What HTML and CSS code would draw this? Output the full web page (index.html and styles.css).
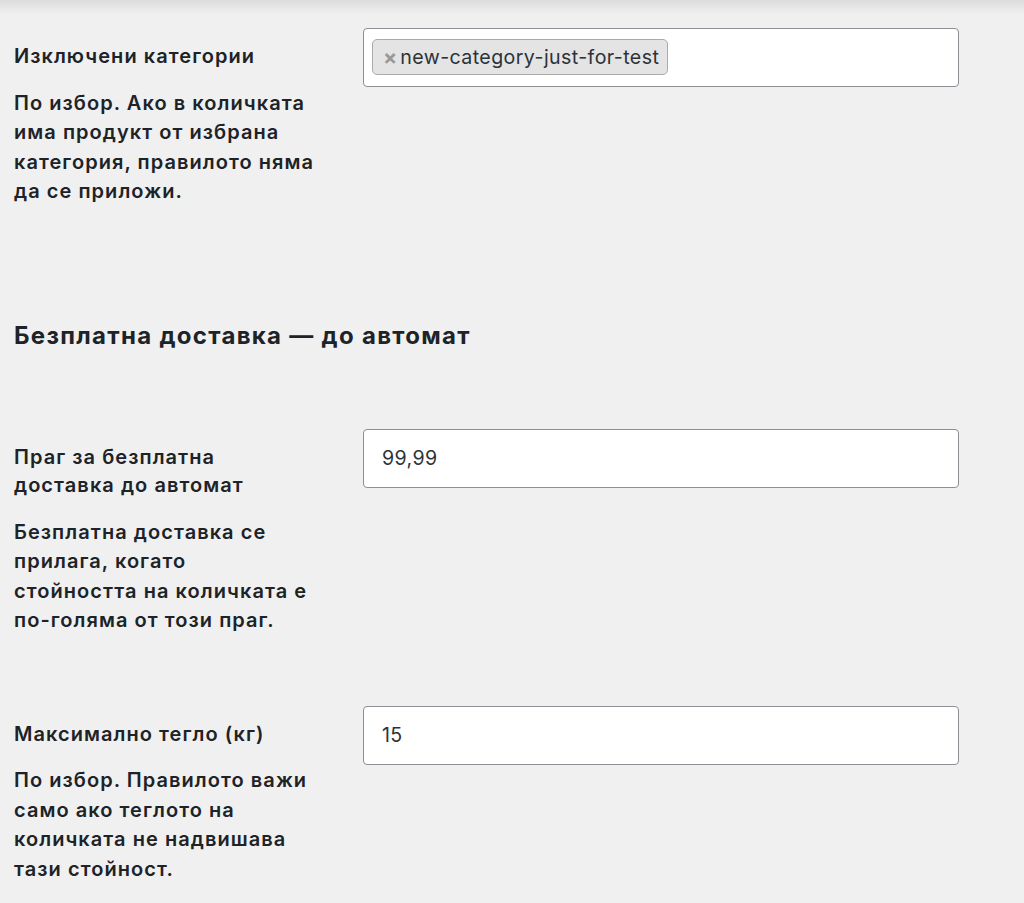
FILE: index.html
```html
<!DOCTYPE html>
<html lang="bg">
<head>
    <meta charset="utf-8">
    <title>Настройки за доставка</title>
    <link rel="stylesheet" href="styles.css">
</head>
<body>
    <div class="page">
        <div class="row">
            <div class="label-col">
                <div class="field-title">Изключени категории</div>
                <p class="description">По избор. Ако в количката има продукт от избрана категория, правилото няма да се приложи.</p>
            </div>
            <div class="field-col">
                <div class="tag-input">
                    <span class="tag"><span class="tag-remove">×</span>new-category-just-for-test</span>
                </div>
            </div>
        </div>

        <h2 class="section-title">Безплатна доставка — до автомат</h2>

        <div class="row">
            <div class="label-col">
                <div class="field-title">Праг за безплатна доставка до автомат</div>
                <p class="description">Безплатна доставка се прилага, когато стойността на количката е по-голяма от този праг.</p>
            </div>
            <div class="field-col">
                <input class="text-input" type="text" value="99,99">
            </div>
        </div>

        <div class="row">
            <div class="label-col">
                <div class="field-title">Максимално тегло (кг)</div>
                <p class="description">По избор. Правилото важи само ако теглото на количката не надвишава тази стойност.</p>
            </div>
            <div class="field-col">
                <input class="text-input" type="text" value="15">
            </div>
        </div>
    </div>
</body>
</html>
```

FILE: styles.css
```css
body {
    margin: 0;
    background: #f0f0f1 linear-gradient(#dcdcde, #f0f0f1 14px) no-repeat;
    font-family: Inter, "Noto Sans", sans-serif;
    color: #1d2327;
}
.page {
    padding: 28px 0 0 14px;
}
.row {
    display: grid;
    grid-template-columns: 349px 596px;
    padding-bottom: 70px;
}
.label-col {
    padding: 14px 49px 0 0;
}
.field-title {
    font-size: 20px;
    font-weight: 600;
    letter-spacing: 1.05px;
    line-height: 28.5px;
}
.description {
    margin: 18px 0 0;
    font-size: 20px;
    font-weight: 600;
    letter-spacing: 1.05px;
    line-height: 29.5px;
}
.section-title {
    margin: 44px 0 78px;
    font-size: 24px;
    font-weight: 700;
    letter-spacing: 1.3px;
    line-height: 30px;
}
.tag-input {
    box-sizing: border-box;
    height: 59px;
    padding: 10px 8px;
    background: #fff;
    border: 1px solid #8c8f94;
    border-radius: 4px;
}
.tag {
    box-sizing: border-box;
    display: inline-flex;
    align-items: center;
    height: 36px;
    padding: 0 8px 0 10px;
    background: #e4e4e4;
    border: 1px solid #aaa;
    border-radius: 5px;
    color: #2c3338;
    font-size: 19.6px;
    letter-spacing: 0.4px;
}
.tag-remove {
    margin-right: 3px;
    color: #999;
    font-weight: 700;
    font-size: 21px;
    letter-spacing: 0;
}
.text-input {
    box-sizing: border-box;
    width: 100%;
    height: 59px;
    margin: 0;
    padding: 0 18px;
    background: #fff;
    border: 1px solid #8c8f94;
    border-radius: 4px;
    color: #2c3338;
    font-family: Inter, "Noto Sans", sans-serif;
    font-size: 19.6px;
    letter-spacing: 0.4px;
}
```
